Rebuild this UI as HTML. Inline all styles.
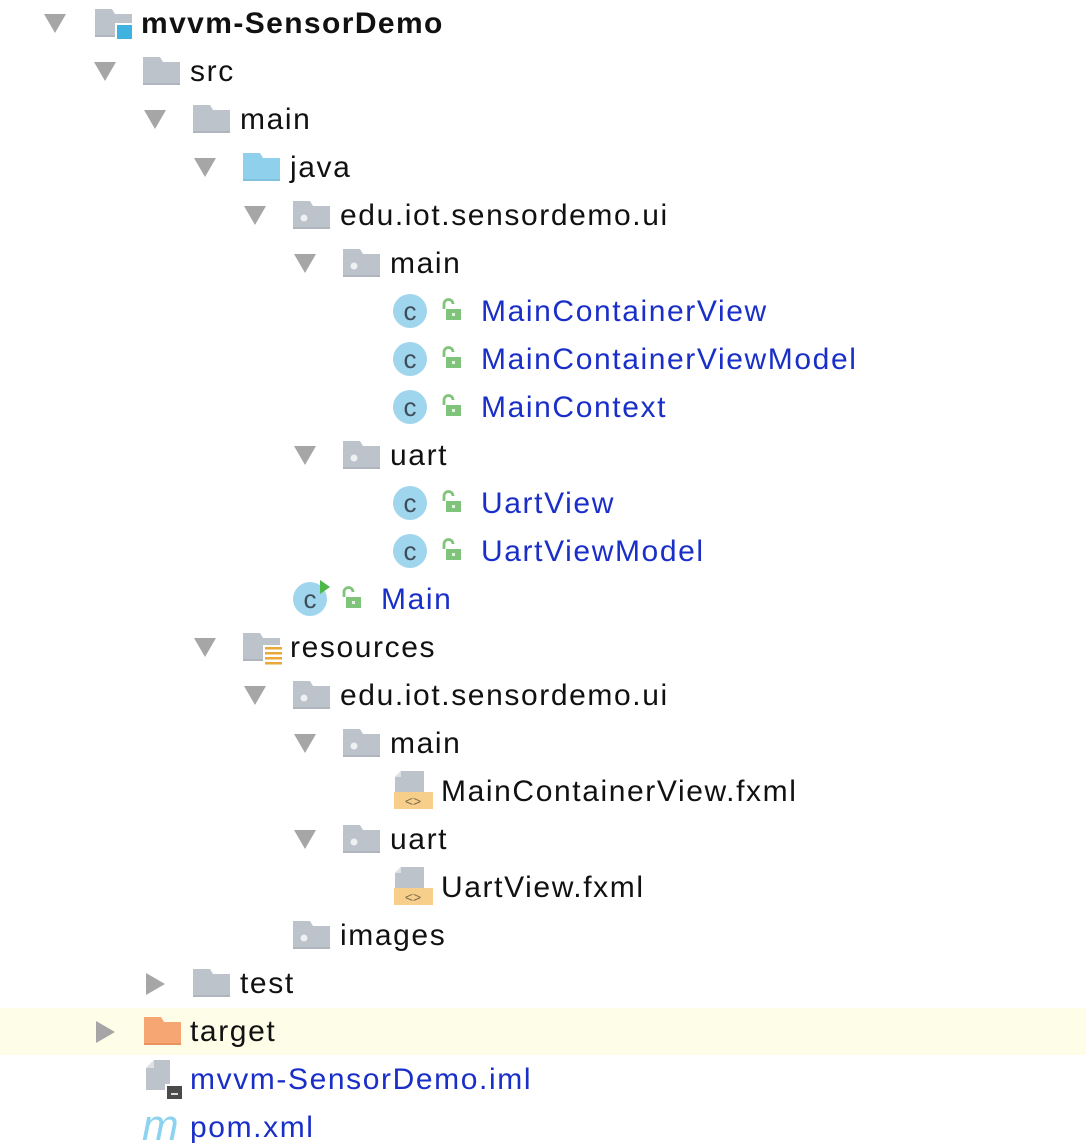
<!DOCTYPE html>
<html><head><meta charset="utf-8"><style>
html,body{margin:0;padding:0;background:#fff;width:1086px;height:1146px;overflow:hidden;position:relative;font-family:"Liberation Sans",sans-serif}
.r{position:absolute;left:0;width:1086px;height:48px}
.r>*{position:absolute}
.t{top:8px;font-size:30px;line-height:32px;letter-spacing:1.6px;color:#111;white-space:nowrap}
.b{color:#1a2fc8}
.tri{top:14px;width:0;height:0;border-left:11px solid transparent;border-right:11px solid transparent;border-top:19px solid #a6a6a6}
.trr{top:13px;width:0;height:0;border-top:11px solid transparent;border-bottom:11px solid transparent;border-left:19px solid #a6a6a6}
svg{overflow:visible}
</style></head><body>
<svg width="0" height="0" style="position:absolute"><defs>
<g id="fold"><path d="M0 0H17L20 5H37V28H0Z" fill="#bcc3ca"/><rect x="0" y="26" width="37" height="2" fill="#aeb5bc"/></g>
<g id="pkg"><use href="#fold"/><circle cx="11" cy="17" r="3.5" fill="#eef0f2"/></g>
<g id="cls"><circle cx="16" cy="16" r="17" fill="#9fd6ee"/><text x="16" y="25" text-anchor="middle" font-family="Liberation Sans" font-size="26" fill="#3f4d59">c</text></g>
<g id="lock"><path d="M2 10V5a4.5 4.5 0 0 1 9 0" fill="none" stroke="#7fc47a" stroke-width="2.8"/><rect x="4" y="10" width="15" height="11" fill="#7fc47a"/><rect x="10" y="14" width="3" height="3" fill="#e6f3e4"/></g>
<g id="fx"><path d="M6 0H29V21H0V6Z" fill="#bcc3ca"/><path d="M0 6L6 0V6Z" fill="#dde1e5"/><rect x="-1" y="21" width="39" height="17" fill="#f7cf8a"/><text x="18" y="35" text-anchor="middle" font-family="Liberation Sans" font-size="14" fill="#7d6a4a">&lt;&gt;</text></g>
</defs></svg>

<div class="r" style="top:0">
<div class="tri" style="left:44px"></div>
<svg style="left:95px;top:9px" width="37" height="30"><use href="#fold"/><rect x="20" y="14" width="17" height="16" fill="#fff"/><rect x="22" y="16" width="15" height="14" fill="#3eb3e0"/></svg>
<div class="t" style="left:141px;font-weight:bold;letter-spacing:1.4px">mvvm-SensorDemo</div>
</div>
<div class="r" style="top:48px"><div class="tri" style="left:94px"></div><svg style="left:143px;top:9px" width="37" height="28"><use href="#fold"/></svg><div class="t" style="left:190px">src</div></div>
<div class="r" style="top:96px"><div class="tri" style="left:144px"></div><svg style="left:193px;top:9px" width="37" height="28"><use href="#fold"/></svg><div class="t" style="left:240px">main</div></div>
<div class="r" style="top:144px"><div class="tri" style="left:194px"></div><svg style="left:243px;top:9px" width="37" height="28"><path d="M0 0H17L20 5H37V28H0Z" fill="#8fd1ec"/><rect x="0" y="26" width="37" height="2" fill="#7fc2de"/></svg><div class="t" style="left:290px">java</div></div>
<div class="r" style="top:192px"><div class="tri" style="left:244px"></div><svg style="left:293px;top:9px" width="37" height="28"><use href="#pkg"/></svg><div class="t" style="left:340px">edu.iot.sensordemo.ui</div></div>
<div class="r" style="top:240px"><div class="tri" style="left:294px"></div><svg style="left:343px;top:9px" width="37" height="28"><use href="#pkg"/></svg><div class="t" style="left:390px">main</div></div>
<div class="r" style="top:288px"><svg style="left:394px;top:7px" width="33" height="33"><use href="#cls"/></svg><svg style="left:442px;top:11px" width="20" height="20"><use href="#lock"/></svg><div class="t b" style="left:481px">MainContainerView</div></div>
<div class="r" style="top:336px"><svg style="left:394px;top:7px" width="33" height="33"><use href="#cls"/></svg><svg style="left:442px;top:11px" width="20" height="20"><use href="#lock"/></svg><div class="t b" style="left:481px">MainContainerViewModel</div></div>
<div class="r" style="top:384px"><svg style="left:394px;top:7px" width="33" height="33"><use href="#cls"/></svg><svg style="left:442px;top:11px" width="20" height="20"><use href="#lock"/></svg><div class="t b" style="left:481px">MainContext</div></div>
<div class="r" style="top:432px"><div class="tri" style="left:294px"></div><svg style="left:343px;top:9px" width="37" height="28"><use href="#pkg"/></svg><div class="t" style="left:390px">uart</div></div>
<div class="r" style="top:480px"><svg style="left:394px;top:7px" width="33" height="33"><use href="#cls"/></svg><svg style="left:442px;top:11px" width="20" height="20"><use href="#lock"/></svg><div class="t b" style="left:481px">UartView</div></div>
<div class="r" style="top:528px"><svg style="left:394px;top:7px" width="33" height="33"><use href="#cls"/></svg><svg style="left:442px;top:11px" width="20" height="20"><use href="#lock"/></svg><div class="t b" style="left:481px">UartViewModel</div></div>
<div class="r" style="top:576px"><svg style="left:294px;top:7px" width="33" height="33"><use href="#cls"/><path d="M26 -3L36 4L26 11Z" fill="#4db848"/></svg><svg style="left:342px;top:11px" width="20" height="20"><use href="#lock"/></svg><div class="t b" style="left:381px">Main</div></div>
<div class="r" style="top:624px"><div class="tri" style="left:194px"></div><svg style="left:243px;top:9px" width="37" height="32"><use href="#fold"/><rect x="20" y="12" width="19" height="20" fill="#fff"/><g fill="#e9a93a"><rect x="22" y="14" width="17" height="2.5"/><rect x="22" y="19" width="17" height="2.5"/><rect x="22" y="24" width="17" height="2.5"/><rect x="22" y="29" width="17" height="2.5"/></g></svg><div class="t" style="left:290px">resources</div></div>
<div class="r" style="top:672px"><div class="tri" style="left:244px"></div><svg style="left:293px;top:9px" width="37" height="28"><use href="#pkg"/></svg><div class="t" style="left:340px">edu.iot.sensordemo.ui</div></div>
<div class="r" style="top:720px"><div class="tri" style="left:294px"></div><svg style="left:343px;top:9px" width="37" height="28"><use href="#pkg"/></svg><div class="t" style="left:390px">main</div></div>
<div class="r" style="top:768px"><svg style="left:395px;top:3px" width="39" height="38"><use href="#fx"/></svg><div class="t" style="left:441px">MainContainerView.fxml</div></div>
<div class="r" style="top:816px"><div class="tri" style="left:294px"></div><svg style="left:343px;top:9px" width="37" height="28"><use href="#pkg"/></svg><div class="t" style="left:390px">uart</div></div>
<div class="r" style="top:864px"><svg style="left:395px;top:3px" width="39" height="38"><use href="#fx"/></svg><div class="t" style="left:441px">UartView.fxml</div></div>
<div class="r" style="top:912px"><svg style="left:293px;top:9px" width="37" height="28"><use href="#pkg"/></svg><div class="t" style="left:340px">images</div></div>
<div class="r" style="top:960px"><div class="trr" style="left:146px"></div><svg style="left:193px;top:9px" width="37" height="28"><use href="#fold"/></svg><div class="t" style="left:240px">test</div></div>
<div class="r" style="top:1008px;background:#fefde7;height:47px"><div class="trr" style="left:96px"></div><svg style="left:144px;top:9px" width="37" height="28"><path d="M0 0H17L20 5H37V28H0Z" fill="#f6a673"/><rect x="0" y="26" width="37" height="2" fill="#e8925e"/></svg><div class="t" style="left:190px">target</div></div>
<div class="r" style="top:1056px"><svg style="left:146px;top:4px" width="36" height="38"><path d="M8 0H24V30H0V8Z" fill="#bcc3ca"/><path d="M0 8L8 0V8Z" fill="#dde1e5"/><rect x="19" y="24" width="17" height="15" fill="#fff"/><rect x="21" y="26" width="15" height="13" fill="#4a4a4a"/><rect x="25" y="33" width="7" height="2" fill="#ddd"/></svg><div class="t b" style="left:190px">mvvm-SensorDemo.iml</div></div>
<div class="r" style="top:1104px"><div class="t" style="left:142px;top:2px;font-size:44px;line-height:40px;font-style:italic;color:#8dd3f0;letter-spacing:0">m</div><div class="t b" style="left:190px">pom.xml</div></div>
</body></html>
